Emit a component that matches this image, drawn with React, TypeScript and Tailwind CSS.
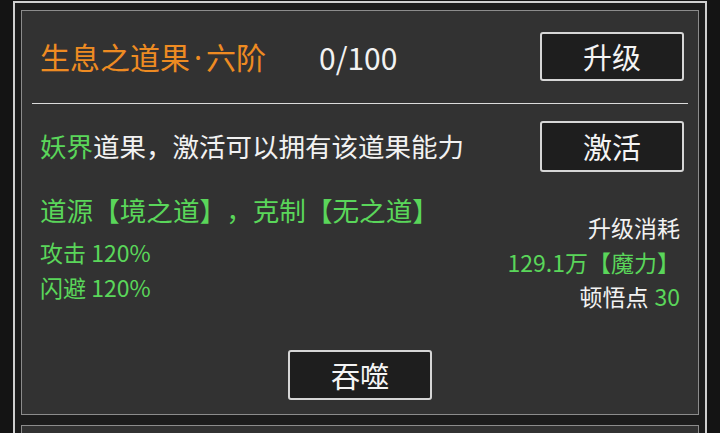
import React from 'react';

const font = { fontFamily: '"Noto Sans CJK SC", "Noto Sans", sans-serif' };

function FrameButton({ label, className = '' }: { label: string; className?: string }) {
  return (
    <button
      className={`flex items-center justify-center bg-[#1e1e1e] border-2 border-[#d6d6d6] rounded-[3px] text-[29px] leading-none text-[#f4f4f4] ${className}`}
    >
      {label}
    </button>
  );
}

export default function App() {
  return (
    <div
      style={font}
      className="w-[720px] h-[433px] overflow-hidden bg-[#141414] px-[13px] pt-[1px] [text-spacing-trim:space-all]"
    >
      <div className="h-[460px] border-2 border-b-0 border-[#cfcfcf] bg-[#1c1c1c] px-[6px] pt-[7px]">
        <div className="h-[405px] border border-[#8c8c8c] bg-[#323232] flex flex-col">
          {/* header */}
          <div className="mt-[21px] h-[49px] flex items-center pl-[18px] pr-[14px]">
            <div className="w-[279px] shrink-0 text-[30px] leading-none text-[#ee8b22]">
              生息之道果<span className="mx-[4px] font-['Noto_Sans']">·</span>六阶
            </div>
            <div className="text-[30px] leading-none text-[#f2f2f2]">0/100</div>
            <FrameButton label="升级" className="ml-auto w-[144px] h-[49px]" />
          </div>

          <div className="mt-[22px] mx-[10px] h-px bg-[#dcdcdc]" />

          {/* activate row */}
          <div className="mt-[17px] h-[51px] flex items-center pl-[18px] pr-[14px]">
            <div className="text-[26.5px] leading-none text-[#f2f2f2]">
              <span className="text-[#5ad65a]">妖界</span>道果，激活可以拥有该道果能力
            </div>
            <FrameButton label="激活" className="ml-auto w-[144px] h-[51px]" />
          </div>

          {/* details */}
          <div className="flex pl-[18px] pr-[18px]">
            <div className="flex flex-col mt-[20px]">
              <div className="h-[36px] flex items-center text-[26.6px] text-[#5ad65a]">道源【境之道】，克制【无之道】</div>
              <div className="mt-[7px] h-[35px] flex items-center text-[23px] text-[#5ad65a]">攻击 120%</div>
              <div className="h-[35px] flex items-center text-[23px] text-[#5ad65a]">闪避 120%</div>
            </div>
            <div className="ml-auto flex flex-col items-end mt-[38px] text-[23px]">
              <div className="h-[35px] flex items-center text-[#f2f2f2]">升级消耗</div>
              <div className="h-[34px] flex items-center text-[#5ad65a]">129.1万【魔力】</div>
              <div className="h-[35px] flex items-center text-[#f2f2f2]">
                顿悟点<span className="ml-[6px] text-[#5ad65a]">30</span>
              </div>
            </div>
          </div>

          <div className="flex justify-center mt-auto mb-[14px]">
            <FrameButton label="吞噬" className="w-[144px] h-[50px]" />
          </div>
        </div>
        <div className="mt-[10px] h-[40px] border border-[#8c8c8c] bg-[#323232]" />
      </div>
    </div>
  );
}
